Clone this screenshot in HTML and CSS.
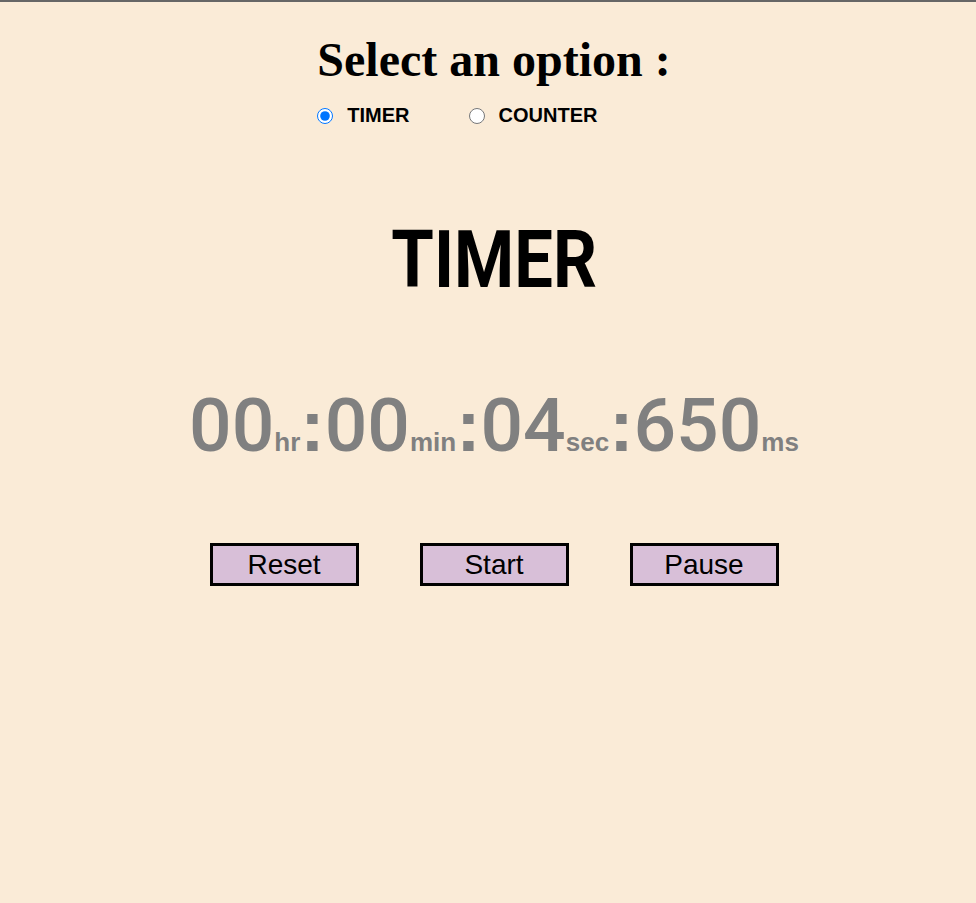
FILE: index.html
```html
<!DOCTYPE html>
<html>
<head>
<meta charset="utf-8">
<link rel="stylesheet" href="styles.css">
</head>
<body>
<div class="page">
  <div class="select">
    <h1 class="select-title">Select an option :</h1>
    <div class="options">
      <label class="opt"><input type="radio" name="mode" checked><span>TIMER</span></label>
      <label class="opt opt2"><input type="radio" name="mode"><span>COUNTER</span></label>
    </div>
  </div>
  <h2 class="mode-title"><span class="mode-text">TIMER</span></h2>
  <div class="clock">
    <span class="num">00</span><span class="unit">hr</span><span class="sep">:</span><span class="num">00</span><span class="unit">min</span><span class="sep">:</span><span class="num">04</span><span class="unit">sec</span><span class="sep">:</span><span class="num">650</span><span class="unit">ms</span>
  </div>
  <div class="buttons">
    <button class="btn">Reset</button>
    <button class="btn">Start</button>
    <button class="btn">Pause</button>
  </div>
</div>
</body>
</html>
```

FILE: styles.css
```css
html, body {
  margin: 0;
  padding: 0;
}
body {
  background: #faebd7;
  border-top: 2px solid #666;
  min-height: 901px;
}
.page {
  display: flex;
  flex-direction: column;
  align-items: center;
  padding-left: 12px;
}
.select {
  display: flex;
  flex-direction: column;
  align-items: flex-start;
}
.select-title {
  font-family: "Liberation Serif", serif;
  font-weight: bold;
  font-size: 48px;
  margin: 30px 0 0 0;
  line-height: 56px;
}
.options {
  display: flex;
  align-items: center;
  margin-top: 16px;
}
.opt {
  display: flex;
  align-items: center;
  font-family: "Liberation Sans", Arial, sans-serif;
  font-weight: bold;
  font-size: 20px;
}
.opt input {
  margin: 0 14px 0 0;
  width: 16px;
  height: 16px;
}
.opt2 {
  margin-left: 59px;
}
.mode-title {
  font-family: "Roboto", "Liberation Sans", sans-serif;
  font-weight: bold;
  font-size: 79px;
  margin: 88px 0 0 0;
  line-height: 90px;
}
.mode-text {
  display: inline-block;
  transform: scaleX(0.87);
}
.clock {
  color: #808080;
  margin-top: 76px;
  white-space: nowrap;
}
.num {
  font-family: "Roboto", "Liberation Sans", sans-serif;
  font-weight: 500;
  font-size: 75px;
}
.sep {
  font-family: "Liberation Sans", Arial, sans-serif;
  font-weight: bold;
  font-size: 73px;
}
.unit {
  font-family: "Liberation Sans", Arial, sans-serif;
  font-weight: bold;
  font-size: 26px;
}
.buttons {
  display: flex;
  gap: 61px;
  margin-top: 74px;
}
.btn {
  width: 149px;
  height: 43px;
  border: 3px solid #000;
  background: #d8bfd8;
  font-family: "Liberation Sans", Arial, sans-serif;
  font-size: 28px;
  color: #000;
  padding: 0;
  border-radius: 0;
}
```
